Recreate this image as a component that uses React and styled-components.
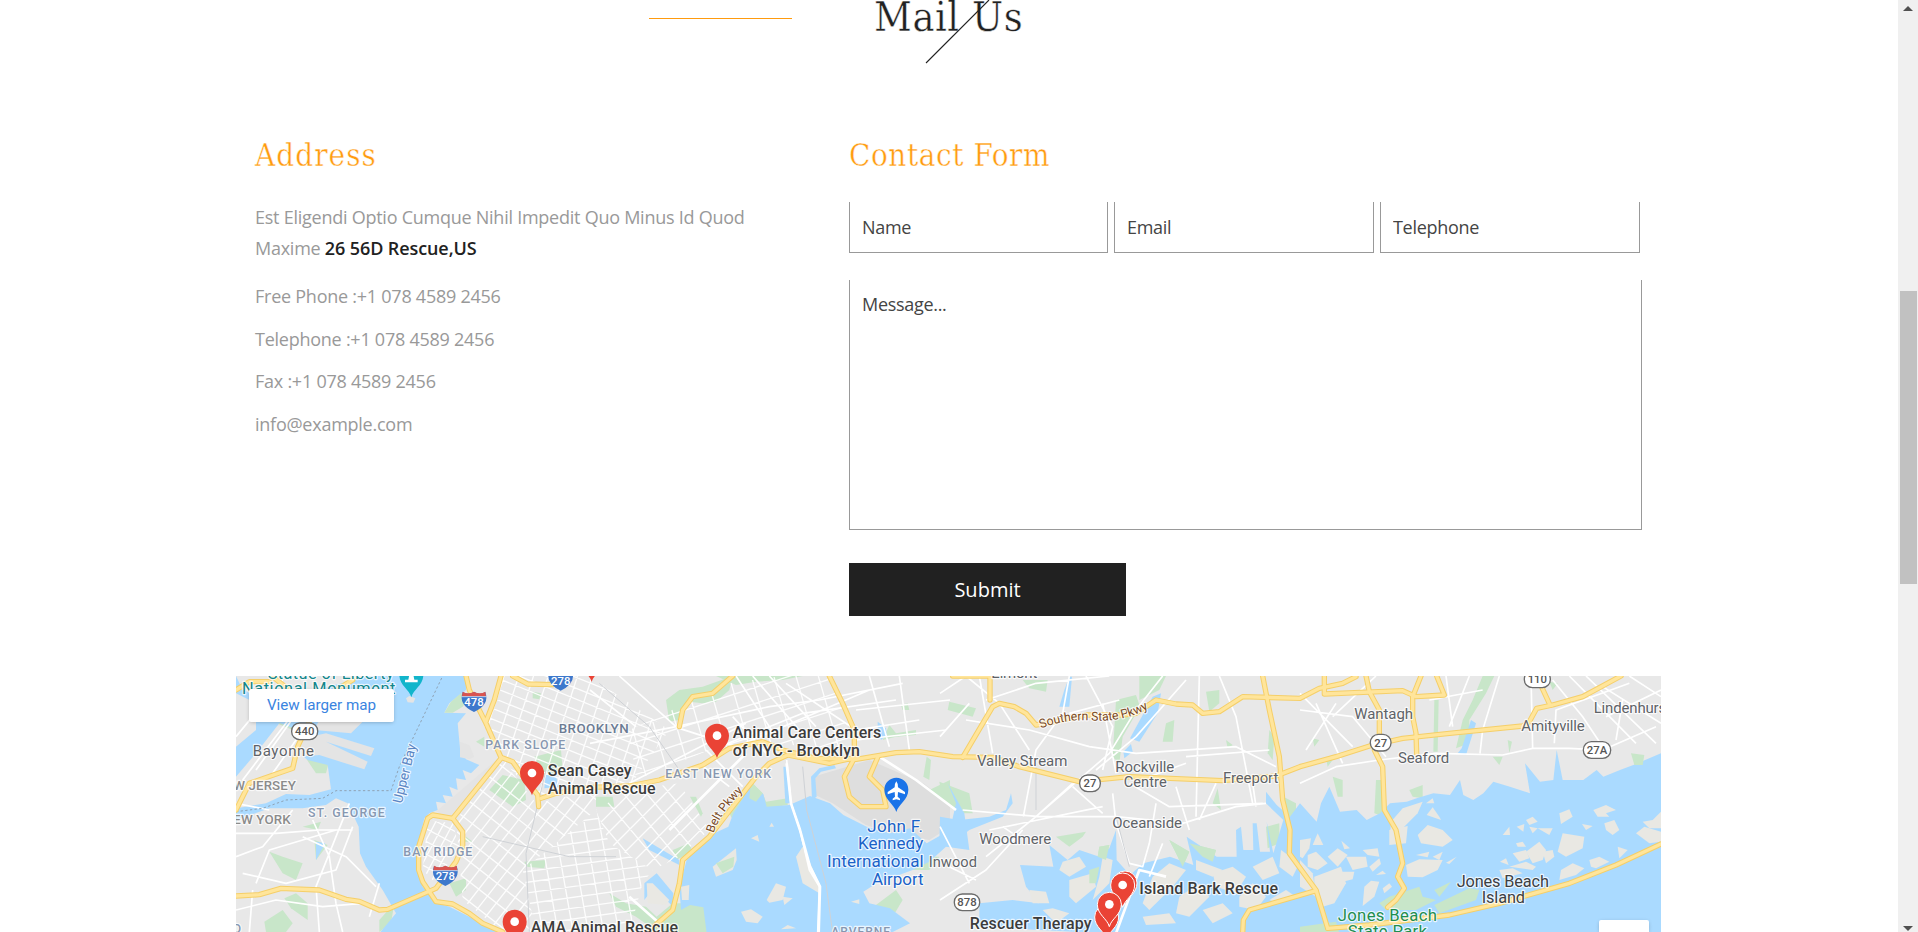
import React from "react";
import styled, { createGlobalStyle } from "styled-components";

const GlobalStyle = createGlobalStyle`
  * { box-sizing: border-box; }
  html, body { margin: 0; background: #fff; overflow: hidden; }
  body { font-family: "Open Sans", sans-serif; color: #999; }
`;

const Window = styled.div`
  display: flex;
  height: 932px;
  overflow: hidden;
`;
const Page = styled.main`
  flex: 1;
  padding-left: 236px;
`;
const Content = styled.div`
  width: 1425px;
`;
const TitleBar = styled.header`
  display: flow-root;
  position: relative;
  height: 128px;
  padding-left: 638px;
`;
const slab = `
  font-family: "DejaVu Serif", "Liberation Serif", serif;
  font-stretch: condensed;
  font-weight: 400;
  margin: 0;
  white-space: nowrap;
  -webkit-text-stroke: 0.4px #fff;
`;
const Title = styled.h2`
  ${slab}
  font-size: 41px;
  line-height: 48px;
  letter-spacing: 0.6px;
  margin-top: -7px;
  color: #212121;
`;
const TitleRule = styled.span`
  position: absolute;
  left: 413px;
  top: 18px;
  width: 143px;
  height: 1px;
  background: #ff9b0e;
`;
const Slash = styled.svg`
  position: absolute;
  left: 689px;
  top: 0;
`;
const Columns = styled.div`
  display: grid;
  grid-template-columns: 594px 793px;
  padding-left: 19px;
  height: 548px;
`;
const SubTitle = styled.h3`
  ${slab}
  font-size: 31px;
  line-height: 36px;
  letter-spacing: ${(p) => p.$spacing};
  margin-top: 9px;
  height: 65px;
  color: #ff9b0e;
`;
const Lines = styled.div`
  font-size: 18px;
  letter-spacing: -0.25px;
  white-space: nowrap;
`;
const Intro = styled.p`
  margin: 0 0 17px;
  line-height: 31px;
  b { color: #212121; font-weight: 600; letter-spacing: -0.1px; }
`;
const Detail = styled.p`
  margin: 0 0 11.6px;
  line-height: 31px;
`;
const Fields = styled.div`
  display: grid;
  grid-template-columns: 259px 260px 260px;
  column-gap: 6px;
  margin-bottom: 27px;
`;
const box = `
  border: 1px solid #999;
  border-top: 0;
  border-radius: 0;
  background: none;
  outline: 0;
  font: 18px "Open Sans", sans-serif;
  letter-spacing: -0.3px;
  display: block;
  width: 100%;
  resize: none;
  &::placeholder { color: #444; opacity: 1; }
`;
const Input = styled.input`
  ${box}
  height: 51px;
  padding: 0 12px;
`;
const Message = styled.textarea`
  ${box}
  height: 250px;
  padding: 12px;
`;
const Submit = styled.button`
  margin-top: 33px;
  width: 277px;
  height: 53px;
  border: 0;
  background: #212121;
  color: #fff;
  font: 20px "Open Sans", sans-serif;
`;
const MapFrame = styled.div`
  position: relative;
  height: 256px;
  overflow: hidden;
  background: #e8e8e8;
  svg { display: block; }
`;
const LargerMap = styled.a`
  position: absolute;
  left: 13px;
  top: 13px;
  width: 145px;
  height: 33px;
  border-radius: 2px;
  background: #fff;
  box-shadow: 0 1px 4px -1px rgba(0, 0, 0, 0.3);
  color: #3a84df;
  font: 15.2px/32px Roboto, sans-serif;
  text-align: center;
`;
const MapControl = styled.span`
  position: absolute;
  right: 12px;
  bottom: 0;
  width: 50px;
  height: 12px;
  border-radius: 2px 2px 0 0;
  background: #fff;
  box-shadow: 0 1px 4px -1px rgba(0, 0, 0, 0.3);
`;
const ScrollTrack = styled.aside`
  display: flex;
  flex-direction: column;
  align-items: center;
  width: 20px;
  background: #f0f0f0;
  padding-top: 6px;
`;
const Thumb = styled.div`
  width: 17px;
  height: 293px;
  margin: 279px 0 341px;
  background: #c1c1c1;
`;
const Arrow = styled.svg`
  display: block;
  height: 6px;
`;

/* ---------- map data: three units to one CSS pixel ---------- */

const water = [
  // Upper Bay
  "395,18 690,18 690,60 640,100 625,128 690,130 665,160 672,235 690,268 730,285 705,310 680,300 690,330 660,325 665,360 640,350 650,380 620,375 630,400 600,395 605,420 580,430 565,445 548,520 548,600 560,650 600,698 640,710 720,750 790,790 430,790 480,730 440,660 390,590 372,550 368,470 335,400 300,385 270,405 200,415 100,415 0,450 0,415 90,400 150,372 220,375 285,358 275,285 215,270 190,250 215,190 120,155 90,110 140,60 240,60",
  "0,18 20,60 100,90 130,160 60,250 0,320 0,230 60,180 60,100 0,70",
  // Jamaica Bay
  "1352,570 1412,500 1477,470 1492,430 1545,348 1582,372 1592,410 1660,405 1722,378 1782,400 1822,435 1892,470 1962,490 2022,475 2072,520 2142,480 2160,400 2135,340 2185,430 2200,540 2130,530 2080,575 2030,600 1922,640 1882,665 1900,700 1962,715 2022,760 1962,790 1412,790 1402,712 1362,705 1335,720 1330,650",
  "1642,290 1655,290 1662,400 1648,400", "1728,390 1725,320 1750,295 1795,285 1800,295 1755,305 1738,325 1742,380",
  "1220,505 1330,570 1330,585 1240,540", "1225,640 1262,610 1312,670 1310,710 1255,650 1225,690",
  // Long Island south bays
  "2352,585 2452,590 2440,525 2495,570 2530,540 2590,560 2620,535 2640,480 2642,570 2682,615 2722,580 2802,560 2872,585 2852,500 2942,560 3002,560 3000,480 3015,470 3022,540 3052,540 3050,460 3062,460 3072,545 3102,545 3092,455 3112,550 3142,450 3090,400 3090,365 3122,405 3162,440 3192,400 3242,455 3255,400 3280,350 3312,425 3362,420 3392,450 3432,430 3462,400 3512,395 3542,385 3592,370 3642,375 3672,330 3682,375 3712,390 3742,370 3772,335 3822,350 3882,370 3867,280 3912,335 3952,330 3962,240 3980,330 4042,330 4082,300 4102,320 4152,300 4192,285 4275,250 4275,790 2600,790 2230,770 2230,700 2330,690 2410,700 2370,650",
  "2500,110 2470,110 2485,60 2500,20 2508,20", "2682,205 2750,80 2775,70 2765,130 2710,215", "2662,245 2685,222 2690,245 2665,265",
  "2110,520 2112,440 2170,450 2260,440 2310,420 2325,370 2330,400 2300,440 2200,480 2150,520",
  "3677,235 3705,150 3720,160 3690,255 3665,250", "240,515 268,520 240,570", "930,310 960,320 970,350 925,355", "1925,155 1950,175 1952,195 1935,210 1925,190",
];

const land = [
  // piers
  "200,205 270,190 415,235 405,258 270,215 395,275 385,298 250,255 190,260", "250,150 290,130 380,155 345,190 235,180",
  "672,215 700,225 715,260 700,268 672,262", "600,425 790,262 800,270 650,445", "510,85 520,78 538,85 532,98 515,97",
];

const airport = ["1732,320 1800,300 1900,270 2062,340 2142,400 2142,470 2080,510 1962,490 1890,465 1790,400 1738,375", "250,100 340,90 430,110 410,170 300,140"];

const islands = [
  "1430,590 1500,535 1502,570 1490,600 1440,620", "1600,470 1607,458 1614,470", "1545,505 1565,495 1570,515", "1515,725 1545,718 1580,740 1565,760 1530,755", "1592,690 1620,640 1650,650 1640,690 1600,698", "1640,680 1670,685 1645,705", "1635,778 1655,765 1680,775", "1845,695 1870,688 1870,702", "1335,650 1360,645 1358,690 1338,690", "1232,640 1250,640 1300,690 1290,705 1235,700", "1680,560 1700,530 1750,640 1750,670 1700,640",
  "2480,575 2530,560 2550,590 2500,620 2470,600", "2500,630 2570,610 2580,650 2520,700 2500,680", "2380,660 2430,665 2440,700 2390,700", "2420,720 2450,715 2500,730 2460,760", "2600,560 2630,570 2620,640 2570,690 2590,620",
  "2750,620 2800,580 2850,600 2810,650 2740,720 2720,700", "2830,680 2890,640 2920,680 2860,740 2820,730", "2930,610 2990,590 3030,620 3000,670 2940,650", "3010,680 3050,640 3090,680 3060,720 3010,710", "3050,590 3110,560 3130,610 3080,630", "2880,570 2960,600 2930,620 2880,600", "3135,540 3190,580 3170,620 3130,590", "2720,740 2800,730 2820,760 2730,765", "2900,720 2960,700 2990,730 2930,760", "3100,690 3150,660 3180,680 3130,700",
  "3192,510 3225,505 3220,535 3200,565 3192,560", "3230,525 3245,490 3262,525", "3275,560 3305,535 3335,555 3305,590", "3215,555 3240,545 3275,580 3245,600 3215,590", "3316,512 3342,535 3325,538", "3330,560 3390,560 3395,590 3350,600", "3380,540 3425,535 3430,560 3395,555", "3400,590 3430,565 3435,582 3410,605", "3235,620 3315,590 3330,640 3295,700 3260,710 3235,660", "3318,605 3355,605 3350,628 3320,635", "3385,650 3405,632 3430,635 3415,680 3380,708", "3192,570 3230,610 3240,680 3192,650", "3440,655 3460,640 3468,650 3445,670", "3420,615 3440,602 3450,612",
  "3465,455 3500,415 3560,395 3545,430 3500,475 3462,500", "3460,480 3515,468 3510,520 3460,525", "3545,495 3575,465 3620,480 3650,510 3620,530 3555,520", "3572,435 3590,412 3610,440 3615,450", "3510,585 3550,568 3620,570 3605,600 3560,622 3515,620", "3540,555 3580,545 3575,562", "3590,560 3620,545 3610,570", "3630,578 3662,560 3640,582", "3570,400 3590,385 3595,400",
  "3970,430 4000,418 4010,440 3975,462", "4072,420 4110,405 4140,420 4110,430 4120,440 4085,440", "4105,460 4135,450 4150,480 4130,495 4110,480", "3965,545 3980,490 4045,500 4040,535 3990,560", "3800,495 3820,470 3822,495", "3870,450 3890,440 3905,455 3880,465", "3842,470 3865,462 3862,485", "3880,470 3905,475 3890,490", "3905,475 3950,475 3940,495", "3840,520 3860,515 3870,530 3845,530", "3870,545 3910,515 3930,540 3920,570 3890,580", "3830,550 3870,540 3880,565 3850,575", "3920,545 3950,540 3955,560 3930,580", "3820,590 3870,575 3900,590 3890,600", "3975,600 4010,580 4045,595 4020,615 3970,630", "4060,570 4090,560 4120,575 4080,595 4065,590", "4145,530 4175,540 4150,565", "4038,462 4070,468 4050,480", "4200,490 4225,470 4275,485 4275,515 4240,520", "4220,455 4250,450 4275,425 4275,475 4240,475", "3790,600 3830,595 3860,610 3800,625", "3792,575 3810,565 3818,585",
];

const greens = [
  "760,360 800,315 865,330 870,390 830,410", "895,260 975,240 980,300 925,320", "210,265 280,270 270,310 240,310", "100,545 140,560 200,580 180,630 140,610", "145,685 180,670 215,700 215,750 165,715", "85,755 140,720 170,760 150,786 90,786", "235,510 275,525 240,570", "200,470 255,455 245,480", "640,640 690,625 690,660 660,680", "430,750 475,700 465,760 430,786", "690,500 710,515 685,515", "890,65 915,70 910,88 890,85", "865,575 930,570 925,595 870,590", "100,150 170,160 170,180", "720,215 745,200 745,230",
  "1290,90 1330,60 1400,50 1490,18 1480,60 1440,95 1400,100 1360,95 1330,150 1300,155", "1440,18 1700,18 1640,30 1560,35 1500,45", "1080,380 1130,380 1135,410 1080,410", "1480,430 1545,335 1580,370 1590,395 1655,385 1655,405 1595,415 1545,400 1490,450", "1362,380 1380,380 1400,430 1395,440", "1310,540 1360,520 1370,545 1320,570", "1120,670 1170,700 1230,710 1262,740 1310,700 1405,700 1425,790 1270,790 1200,740 1140,710", "1700,480 1715,540 1740,590 1730,610 1705,570", "1995,105 2015,100 2020,120 2000,120", "1940,210 1960,165 1980,190 2040,180 2040,195 1980,200", "2072,260 2085,270 2080,330 2062,320", "2080,360 2142,330 2142,400 2100,380", "1900,720 1980,660 2000,690 1970,740 1880,760", "2030,600 2060,560 2110,560 2080,600",
  "2140,95 2220,115 2210,140 2135,120", "2110,335 2200,370 2210,430 2175,430 2120,390", "2360,30 2435,30 2430,65 2380,55", "2640,90 2700,75 2712,110 2660,200 2650,280 2630,260", "2790,160 2815,150 2810,215 2780,215", "2710,18 2790,18 2770,60 2710,90", "2910,65 2950,60 2950,100 2920,125", "3100,180 3115,200 3110,270 3095,250", "2460,500 2550,485 2540,500 2500,530", "2590,530 2620,525 2610,570 2585,560", "2800,510 2860,545 2840,590 2820,550", "2860,520 2940,540 2930,575 2900,560", "3090,470 3130,460 3130,520 3095,535", "3142,380 3180,400 3180,440 3150,440", "2970,210 2990,225 2975,235", "2560,600 2590,590 2580,640 2560,640", "2930,400 2945,355 2955,420",
  "3740,18 3775,18 3750,70 3700,150 3700,220 3660,235 3680,150 3710,90", "3595,90 3608,90 3605,245 3592,245", "3290,320 3320,330 3320,380 3305,380", "3420,330 3440,330 3445,440 3415,430", "3520,360 3560,345 3560,385 3530,380", "3770,260 3800,260 3790,285", "3230,205 3250,210 3235,230", "3940,35 3965,40 3950,60", "3270,265 3290,270 3275,290", "3815,210 3828,215 3820,250",
];

// parks that lie on islands or along the water's edge
const shoreGreens = [
  "4185,250 4225,255 4220,285 4195,285", "3430,700 3460,680 3550,650 3560,680 3600,690 3540,720 3450,720", "3595,660 3645,635 3610,680", "3595,705 3700,655 3730,660 3720,690 3610,730", "3192,770 3300,755 3310,790 3192,790", "1440,580 1495,560 1492,590 1460,610", "625,128 645,95 675,70 700,80 680,110 650,128",
  "2860,520 2940,540 2930,575 2900,560", "2560,600 2590,590 2580,640 2560,640", "1545,335 1580,370 1560,395 1540,385", "2800,510 2860,545 2840,590 2820,550", "2590,530 2620,525 2610,570 2585,560",
];

const streets = [
  "M0,490 L120,490 250,480 350,480 M0,560 L80,530 170,420 M20,610 L150,640 300,600 350,470 M60,640 L100,540 300,480 M200,500 L330,560 420,650 M300,700 L280,560 230,450 M0,720 L120,690 260,710 380,700 M40,786 L50,660 M250,786 L240,650 340,400 M400,740 L430,640 M0,400 L100,420 M20,330 L180,120 M60,300 L210,90 M110,310 L250,110 M0,200 L140,30 M320,786 L300,700",
  "M1200,170 L1062,60 M1062,220 L1320,170 1600,110 1750,90 2000,40 M1320,170 L1150,18 M1330,175 L1500,230 1900,60 M1180,340 L1530,160 M1490,140 L1600,260 M1500,18 L1620,200 M1550,18 L1690,180 M1600,18 L1740,170 M1650,40 L1860,180 M1450,230 L1700,130 1980,90 M1860,180 L2050,150 M1860,210 L2130,180 M1860,120 L2142,90 M1900,18 L1960,230 M1990,18 L2020,240 M1410,240 L1520,350 M1390,280 L1480,350",
  "M2112,70 L2190,18 2290,100 2380,240 M2112,200 L2200,100 M2190,150 L2380,180 2560,230 2700,250 3000,230 3120,290 M2230,18 L2270,250 M2250,90 L2400,40 2620,18 M2362,440 L2400,240 2480,130 2500,18 M2400,440 L2620,250 2700,120 2780,18 M2580,300 L2700,200 2850,30 M2500,130 L2650,90 M2550,18 L2630,170 2600,300 M2640,310 L2600,100 M2890,18 L2880,440 M2950,18 L3000,140 3050,400 M2850,260 L3100,240 M2740,320 L2850,280 M2680,340 L2800,410 3080,400 M2780,520 L2740,620 M2180,420 L2410,440 2640,440 2840,460 3000,410 3090,400 M2250,560 L2400,440 2510,340 M2260,480 L2600,410 M2510,350 L2600,430 M2630,370 L2640,460 2680,580 2720,590 2740,520 2760,400 M2820,350 L2860,480 M2940,340 L2890,450 M3050,340 L3060,410 M2300,470 L2330,490 M2112,690 L2250,600 2360,480 M2140,590 L2220,630 M2112,470 L2200,640",
  "M3192,340 L3300,290 3430,270 3600,250 3800,255 3890,235 4000,235 4100,240 4260,170 M3192,120 L3350,140 3450,260 M3210,240 L3300,100 M3240,100 L3320,280 M3192,70 L3350,230 M3420,18 L3290,140 M3640,170 L3700,18 M3732,250 L3740,180 3790,18 M3630,18 L3650,170 M3580,90 L3740,60 M3885,18 L3890,235 M3950,30 L4040,140 4100,230 M3955,220 L3960,120 4180,40 M4000,18 L4200,220 M4050,18 L4260,220 M4100,50 L4275,160 M4160,90 L4140,210 M4110,140 L4275,60 M4180,18 L4275,80",
  "M1652,270 L1665,400 1692,480 1720,600 1750,650 1745,790",
];
const thickStreets = "M1930,260 L2040,330 2160,420 M1652,280 L1665,400 1692,480 1722,590 1752,650 1748,790 M1300,480 L1530,250 M1180,680 L1270,760 M2790,620 L2710,600 2640,790";

const rails = "M0,425 L80,415 150,390 260,385 300,362 465,362 490,290 620,18";
const greyLines = "M1700,290 L1712,420 1770,640 1790,790 M2400,420 L2400,280 M2640,440 L2680,590 M930,300 L870,550 880,786 M740,500 L1000,560 1140,560 M1090,40 L1240,170 1330,300";

const highways = [
  "M0,678 L70,674 135,655 250,660 330,688 370,694 430,720 455,718 600,655 660,575 680,530 680,485 650,445 590,435 575,445 548,530 548,600 560,635 600,695 650,702 700,730 740,760 800,786",
  "M650,445 L795,265 M690,18 L700,60 750,160 795,262 830,275 865,325 905,375 908,410 M795,18 L775,90 750,155 M830,18 L875,42 950,44",
  "M915,385 L960,370 1062,352 1180,348 1270,330 1400,285 1480,235 1580,215 1640,240 1740,265 1860,268 1980,248 2050,245 2150,260 2270,262 2350,290 2530,335 2680,320 2960,332 3120,318 3192,290 3300,260 3410,225 3500,205 3640,190 3860,168 3880,155 3902,115 3950,105 4040,80 4155,18",
  "M1780,18 L1820,100 1855,180 1855,265 1825,320 1840,380 1875,410 1950,410 1940,360 1900,320 1925,262",
  "M1230,790 L1310,720 1330,640 1340,570 1420,500 1560,320 1600,280 1655,255 1780,280 1860,262",
  "M1330,170 L1340,120 1370,80 1430,70 1490,18", "M2150,18 L2262,18 2262,90 M2180,262 L2270,110 2290,100 2335,110 2370,130 2400,165 2430,160 2550,135 2660,135 2700,130 2760,90 2820,102 2870,105 2900,130 2950,125 3020,80 3192,85 3250,55 3320,40 3360,20",
  "M3080,18 L3100,120 3130,260 3140,390 3162,480 3160,550 3240,660 3275,775",
  "M3265,18 L3265,72 3500,62 3540,80 3625,75 3602,18", "M3390,18 L3400,65 3430,120 3430,200 3415,240 3440,290 3445,420 3480,480 3500,580 3485,620 3505,655 3480,690 3455,712", "M3555,18 L3530,80 3530,140 3540,190 3542,250", "M3912,40 L3942,105",
  "M3240,662 L3040,720 3022,750 3020,790", "M3275,775 L3400,765 3640,735 3790,700 4000,640 4140,585 4275,522",
  "M0,60 L40,35 100,35 M0,420 L40,340 170,295 185,230 220,155 M160,60 L110,20 M300,60 L350,30",
];

const grids = [
  { id: "gA", area: "800,18 1060,18 1300,180 1180,350 900,380 790,260 740,160", angles: [22, 108], gap: 30 },
  { id: "gB", area: "660,450 800,270 900,400 1080,360 1080,420 960,520 860,600 900,786 800,786 680,690", angles: [-52, 38], gap: 34 },
  { id: "gC", area: "1080,420 1180,360 1330,340 1420,480 1330,560 1250,600 1120,520", angles: [-45, 50], gap: 38 },
  { id: "gD", area: "575,450 650,460 670,530 600,640 560,600", angles: [-62, 28], gap: 24 },
  { id: "gE", area: "1080,420 1120,520 1250,600 1220,640 1180,786 900,786 860,600 960,520", angles: [-8, 80], gap: 32 },
  { id: "gF", area: "1180,180 1480,40 1640,18 1790,18 1850,240 1600,220 1420,240 1200,330", angles: [-18, 74], gap: 46 },
];

function gridLines({ angles, gap, area }) {
  const pts = area.split(" ").map((p) => p.split(",").map(Number));
  const cx = pts.reduce((s, p) => s + p[0], 0) / pts.length;
  const cy = pts.reduce((s, p) => s + p[1], 0) / pts.length;
  let d = "";
  angles.forEach((a, n) => {
    const c = Math.cos((a * Math.PI) / 180);
    const s = Math.sin((a * Math.PI) / 180);
    const step = n ? gap * 1.4 : gap;
    for (let k = -14; k <= 14; k++) {
      const x = cx - s * k * step;
      const y = cy + c * k * step;
      d += `M${(x - c * 480).toFixed(0)},${(y - s * 480).toFixed(0)} L${(x + c * 480).toFixed(0)},${(y + s * 480).toFixed(0)} `;
    }
  });
  return d;
}

const GREY = "#5f6368";
const AREA = "#8797b0";
const DARK = "#3c3c3c";
// [text, x, baseline, width, size, colour, weight]
const labels = [
  ["Statue of Liberty", 97, 27, 378, 49, "#12868b", 400],
  ["National Monument", 20, 72, 460, 49, "#12868b", 400],
  ["Bayonne", 52, 257, 184, 45, GREY, 400],
  ["W JERSEY", -6, 361, 188, 40, "#8b8b8b", 500],
  ["EW YORK", -6, 463, 172, 40, "#8b8b8b", 500],
  ["ST. GEORGE", 218, 441, 230, 37, AREA, 500],
  ["BAY RIDGE", 504, 559, 207, 37, AREA, 500],
  ["PARK SLOPE", 750, 236, 240, 37, AREA, 500],
  ["BROOKLYN", 970, 188, 210, 40, "#6b7b93", 500],
  ["D", -6, 790, 24, 36, AREA, 500],
  ["Sean Casey", 937, 317, 252, 48, DARK, 500],
  ["Animal Rescue", 937, 372, 324, 48, DARK, 500],
  ["AMA Animal Rescue", 886, 788, 442, 48, DARK, 500],
  ["Animal Care Centers", 1492, 205, 446, 48, DARK, 500],
  ["of NYC - Brooklyn", 1492, 259, 382, 48, DARK, 500],
  ["EAST NEW YORK", 1290, 323, 317, 37, AREA, 500],
  ["John F.", 1896, 486, 167, 51, "#1a62c8", 400],
  ["Kennedy", 1868, 538, 196, 51, "#1a62c8", 400],
  ["International", 1775, 591, 290, 51, "#1a62c8", 400],
  ["Airport", 1910, 644, 155, 51, "#1a62c8", 400],
  ["Inwood", 2080, 592, 145, 44, GREY, 400],
  ["ARVERNE", 1788, 797, 176, 36, AREA, 500],
  ["Elmont", 2268, 25, 138, 45, GREY, 400],
  ["Valley Stream", 2225, 289, 271, 45, GREY, 400],
  ["Rockville", 2640, 305, 177, 45, GREY, 400],
  ["Centre", 2665, 351, 129, 44, GREY, 400],
  ["Freeport", 2963, 338, 166, 45, GREY, 400],
  ["Oceanside", 2631, 473, 209, 45, GREY, 400],
  ["Woodmere", 2232, 521, 216, 45, GREY, 400],
  ["Island Bark Rescue", 2712, 673, 416, 48, DARK, 500],
  ["Rescuer Therapy", 2203, 777, 366, 48, DARK, 500],
  ["Wantagh", 3357, 148, 176, 45, GREY, 400],
  ["Seaford", 3488, 278, 154, 45, GREY, 400],
  ["Amityville", 3858, 184, 190, 45, GREY, 400],
  ["Lindenhurst", 4075, 128, 232, 45, GREY, 400],
  ["Jones Beach", 3664, 652, 277, 49, "#3c4043", 400],
  ["Island", 3739, 700, 130, 49, "#3c4043", 400],
  ["Jones Beach", 3307, 752, 298, 50, "#1e8e4f", 400],
  ["State Park", 3337, 800, 238, 50, "#1e8e4f", 400],
];

const ovals = [["440", 206, 184, 78], ["27", 2562, 340, 62], ["878", 2193, 697, 76], ["110", 3904, 28, 78], ["27", 3434, 218, 62], ["27A", 4083, 240, 82]];
const shields = [["478", 714, 96], ["278", 974, 32], ["278", 628, 618]];
const pins = [[888, 376], [836, 822], [1443, 264], [1067, 36], [2667, 706], [2612, 808], [2660, 712], [2620, 770]];

const Label = styled.text`
  font-family: Roboto, sans-serif;
  paint-order: stroke;
  stroke: rgba(255, 255, 255, 0.75);
  stroke-width: 7px;
  stroke-linejoin: round;
`;
const Badge = styled.text`
  font-family: Roboto, sans-serif;
  font-weight: 500;
  text-anchor: middle;
`;

const Pin = ({ x, y, fill = "#ea4335", outline }) => (
  <g transform={`translate(${x} ${y})`}>
    <path d="M0,0 C-6,-24 -36,-36 -36,-67 A36,36 0 1 1 36,-67 C36,-36 6,-24 0,0Z" fill={fill} stroke={outline ? "#fff" : "none"} strokeWidth="3" />
  </g>
);

const Oval = ({ text, x, y, w }) => (
  <g>
    <rect x={x - w / 2} y={y - 25} width={w} height="50" rx="24" fill="#fff" stroke="#6b6b6b" strokeWidth="4" />
    <Badge x={x} y={y + 12} fontSize="34" fill="#555">{text}</Badge>
  </g>
);

const Shield = ({ text, x, y }) => (
  <g transform={`translate(${x} ${y})`}>
    <path d="M-34,-30 Q-18,-20 0,-30 Q18,-20 34,-30 Q48,8 0,30 Q-48,8 -34,-30Z" fill="#3d78cc" />
    <path d="M-34,-31 Q-18,-22 0,-31 Q18,-22 34,-31 L36,-17 L-36,-17Z" fill="#d9544f" />
    <path d="M-37,-16 H37" stroke="#fff" strokeWidth="2" />
    <Badge x="0" y="13" fontSize="34" fill="#fff">{text}</Badge>
  </g>
);

const Polys = ({ list, fill }) => list.map((p, i) => <polygon key={i} points={p} fill={fill} />);

const CityMap = () => (
  <svg width="1425" height="256" viewBox="0 18 4275 768">
    <rect y="18" width="4275" height="768" fill="#e8e8e8" />
    <Polys list={airport} fill="#dedede" />
    <Polys list={greens} fill="#c8e6c9" />
    <Polys list={water} fill="#aadaff" />
    <Polys list={land} fill="#e4e4e4" />
    <Polys list={islands} fill="#e9e8e3" />
    <Polys list={shoreGreens} fill="#c8e6c9" />
    <g fill="none" stroke="#fff" strokeWidth="4" strokeOpacity="0.9">
      {grids.map((g) => (
        <g key={g.id}>
          <clipPath id={g.id}><polygon points={g.area} /></clipPath>
          <path d={gridLines(g)} clipPath={`url(#${g.id})`} />
        </g>
      ))}
    </g>
    <g fill="none" stroke="#fff" strokeWidth="5" strokeLinejoin="round">
      {streets.map((d, i) => <path key={i} d={d} />)}
      <path d={thickStreets} strokeWidth="8" />
    </g>
    <path d={greyLines} fill="none" stroke="#cfd2d6" strokeWidth="3" />
    <path d={rails} fill="none" stroke="#8fa3b5" strokeWidth="3" strokeDasharray="7 7" />
    <g fill="none" strokeLinejoin="round" strokeLinecap="round">
      {highways.map((d, i) => <path key={i} d={d} stroke="#f5cf69" strokeWidth="16" />)}
      {highways.map((d, i) => <path key={i} d={d} stroke="#ffe59b" strokeWidth="10" />)}
    </g>

    {shields.map(([t, x, y], i) => <Shield key={i} text={t} x={x} y={y} />)}
    {ovals.map(([t, x, y, w], i) => <Oval key={i} text={t} x={x} y={y} w={w} />)}

    {labels.map(([t, x, y, w, size, fill, weight], i) => (
      <Label key={i} x={x - 2} y={y} textLength={w} fontSize={size} fill={fill} fontWeight={weight}>{t}</Label>
    ))}
    <Label transform="translate(497 402) rotate(-76)" fontSize="41" textLength="182" fill="#5b86c4">Upper Bay</Label>
    <path id="belt" d="M1433,490 Q1450,430 1530,355" fill="none" />
    <Label fontSize="36" fill="#7a4a26"><textPath href="#belt" textLength="156">Belt Pkwy</textPath></Label>
    <path id="southern" d="M2415,176 Q2480,148 2560,151 Q2660,160 2744,112" fill="none" />
    <Label fontSize="37" fill="#7a4a26"><textPath href="#southern" textLength="332">Southern State Pkwy</textPath></Label>

    {pins.map(([x, y], i) => (
      <g key={i}>
        <Pin x={x} y={y} outline={i > 3} />
        {i !== 5 && <circle cx={x} cy={y - 67} r="13" fill="#fff" />}
      </g>
    ))}
    <Pin x={1981} y={426} fill="#1a73e8" />
    <path d="M1981,334 q5,6 5,18 l21,14 v7 l-21,-7 l-1,14 l7,6 v5 l-11,-3 l-11,3 v-5 l7,-6 l-1,-14 l-21,7 v-7 l21,-14 q0,-12 5,-18z" fill="#fff" />
    <Pin x={526} y={82} fill="#12b5cb" />
    <path d="M507,37 v-8 h10 l4,-20 h10 l4,20 h10 v8z" fill="#fff" />
  </svg>
);

export default function App() {
  return (
    <Window>
      <GlobalStyle />
      <Page>
        <Content>
          <TitleBar>
            <TitleRule />
            <Title>Mail Us</Title>
            <Slash width="66" height="64" viewBox="0 0 66 64">
              <path d="M1,63 L64,0" stroke="#212121" strokeWidth="1.1" />
            </Slash>
          </TitleBar>
          <Columns>
            <section>
              <SubTitle $spacing="1.1px">Address</SubTitle>
              <Lines>
                <Intro>
                  Est Eligendi Optio Cumque Nihil Impedit Quo Minus Id Quod
                  <br />
                  Maxime <b>26 56D Rescue,US</b>
                </Intro>
                <Detail>Free Phone :+1 078 4589 2456</Detail>
                <Detail>Telephone :+1 078 4589 2456</Detail>
                <Detail>Fax :+1 078 4589 2456</Detail>
                <Detail>info@example.com</Detail>
              </Lines>
            </section>
            <section>
              <SubTitle $spacing="0.6px">Contact Form</SubTitle>
              <Fields>
                <Input placeholder="Name" />
                <Input placeholder="Email" />
                <Input placeholder="Telephone" />
              </Fields>
              <Message placeholder="Message..." />
              <Submit>Submit</Submit>
            </section>
          </Columns>
          <MapFrame>
            <CityMap />
            <LargerMap>View larger map</LargerMap>
            <MapControl />
          </MapFrame>
        </Content>
      </Page>
      <ScrollTrack>
        <Arrow width="10" height="6" viewBox="0 0 10 6"><path d="M0,5 L5,0 L10,5z" fill="#505050" /></Arrow>
        <Thumb />
        <Arrow width="10" height="6" viewBox="0 0 10 6"><path d="M0,1 L5,6 L10,1z" fill="#505050" /></Arrow>
      </ScrollTrack>
    </Window>
  );
}
